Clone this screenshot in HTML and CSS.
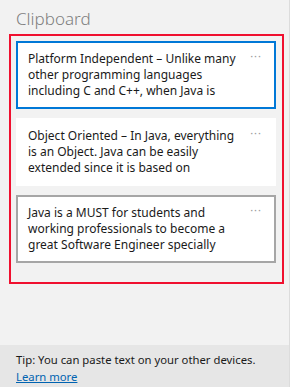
FILE: index.html
```html
<!DOCTYPE html>
<html lang="en">
<head>
    <meta charset="UTF-8">
    <meta name="viewport" content="width=device-width, initial-scale=1.0">
    <title>Clipboard</title>
    <link rel="stylesheet" href="styles.css">
</head>
<body>

    <div class="panel">
        <div class="main">
            <h1 class="title">Clipboard</h1>

            <div class="highlight">
                <div class="clip selected">
                    <p class="clip-text">Platform Independent – Unlike many<br>other programming languages<br>including C and C++, when Java is</p>
                    <span class="more">···</span>
                </div>
                <div class="clip">
                    <p class="clip-text">Object Oriented – In Java, everything<br>is an Object. Java can be easily<br>extended since it is based on</p>
                    <span class="more">···</span>
                </div>
                <div class="clip hover">
                    <p class="clip-text">Java is a MUST for students and<br>working professionals to become a<br>great Software Engineer specially</p>
                    <span class="more">···</span>
                </div>
            </div>
        </div>

        <div class="tip">
            <p>Tip: You can paste text on your other devices.</p>
            <a href="#" class="learn">Learn more</a>
        </div>
    </div>

</body>
</html>
```

FILE: styles.css
```css
html, body {
    margin: 0;
    padding: 0;
}
body {
    font-family: "Noto Sans", "Open Sans", sans-serif;
    background-color: #fff;
    width: 294px;
    height: 387px;
    overflow: hidden;
}
.panel {
    width: 289px;
    height: 387px;
    display: flex;
    flex-direction: column;
    background-color: #f2f2f2;
    border-right: 1px solid #dcdcdc;
}
.main {
    flex: 1;
    padding: 0 5px 0 9px;
}
.title {
    margin: 0;
    padding: 8px 0 0 7px;
    height: 34px;
    box-sizing: border-box;
    font-size: 17px;
    font-weight: 300;
    color: #808080;
    line-height: 22px;
}
.highlight {
    width: 275px;
    box-sizing: border-box;
    border: 2px solid #f0102f;
    padding: 5px 6px 19px 5px;
    display: flex;
    flex-direction: column;
    gap: 9px;
}
.clip {
    height: 68px;
    box-sizing: border-box;
    border: 2px solid transparent;
    background-color: #fff;
    padding: 8px 12px 0 10px;
    display: flex;
}
.clip.selected {
    border-color: #0078d7;
}
.clip.hover {
    border-color: #a6a6a6;
}
.clip-text {
    margin: 0;
    flex: 1;
    white-space: nowrap;
    font-size: 12px;
    line-height: 16px;
    color: #1a1a1a;
}
.more {
    font-size: 11px;
    line-height: 10px;
    color: #9a9a9a;
    letter-spacing: 1px;
}
.tip {
    height: 42px;
    box-sizing: border-box;
    background-color: #e6e6e6;
    padding: 6px 16px 0 16px;
    font-size: 11.3px;
    color: #1a1a1a;
}
.tip p {
    margin: 0;
    line-height: 17px;
}
.learn {
    color: #0063b1;
    line-height: 17px;
}
```
